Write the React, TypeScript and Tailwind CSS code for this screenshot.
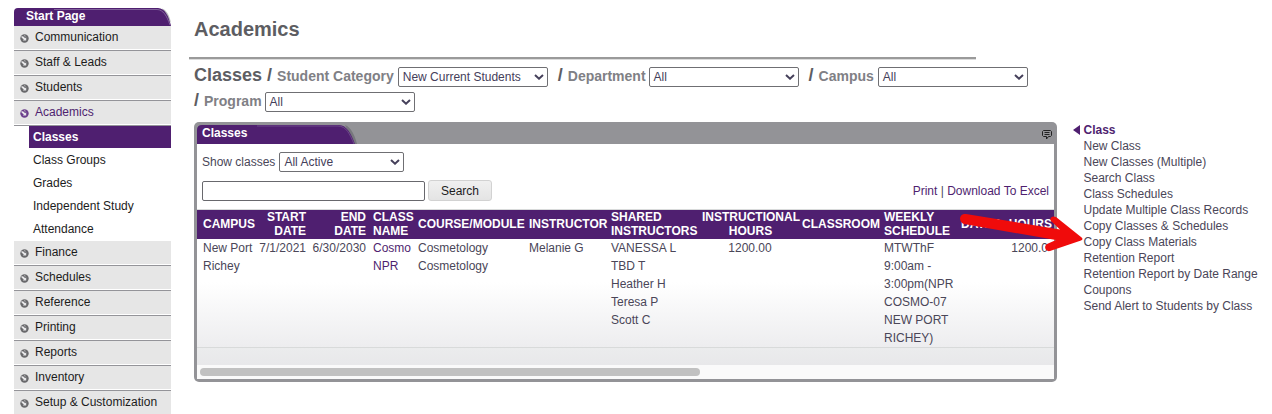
import React from "react";

const top = ["Communication", "Staff & Leads", "Students", "Academics"];
const sub = ["Class Groups", "Grades", "Independent Study", "Attendance"];
const bottom = ["Finance", "Schedules", "Reference", "Printing", "Reports", "Inventory", "Setup & Customization"];
const actions = [
  "New Class", "New Classes (Multiple)", "Search Class", "Class Schedules", "Update Multiple Class Records",
  "Copy Classes & Schedules", "Copy Class Materials", "Retention Report", "Retention Report by Date Range",
  "Coupons", "Send Alert to Students by Class",
];

function Bullet({ active }: { active: boolean }) {
  return (
    <svg width="9" height="9" viewBox="0 0 9 9" className="mt-[3px] shrink-0">
      <circle cx="4.5" cy="4.5" r="4.2" fill={active ? "#6b3f8c" : "#68686b"} />
      <path d="M1 2.6 L3 2.2 L5.2 4.2 L6.2 3.2 V6.6 H2.8 L3.8 5.6 L1.8 3.8 Z" fill="#e8e8ea" />
      <path d="M4 1.6 L5.6 2.2" stroke="#c9c9cc" strokeWidth="0.8" />
    </svg>
  );
}

function NavItem({ label }: { label: string }) {
  const active = label === "Academics";
  return (
    <div className="flex h-[25px] shrink-0 flex-col">
      <div className={"flex h-[23px] items-center bg-[#e6e6e6] pb-[2px] pl-[6px] " + (active ? "text-[#4f1f70]" : "text-[#1c1c1c]")}>
        <Bullet active={active} />
        <span className="ml-[6px] whitespace-nowrap">{label}</span>
      </div>
      <div className="h-px bg-white" />
      <div className="h-px bg-[#949499]" />
    </div>
  );
}

function Select({ value, width }: { value: string; width: string }) {
  return (
    <div className={"flex h-[20px] items-center justify-between rounded-[2px] border border-[#6f6f73] bg-white pl-1 pr-[3px] text-[12px] font-normal text-[#45405a] " + width}>
      <span className="whitespace-nowrap">{value}</span>
      <svg width="10" height="6" viewBox="0 0 10 6" fill="none" stroke="#45405a" strokeWidth="2">
        <path d="M1 1 L5 4.7 L9 1" />
      </svg>
    </div>
  );
}

const cols = "grid grid-cols-[51px_55px_60px_45px_111px_82px_91px_101px_81px_78px_47px_50px]";

export default function App() {
  return (
    <div className="relative flex h-[414px] w-[1272px] overflow-hidden bg-white font-['Liberation_Sans',Arial,sans-serif] text-[12px] leading-[16px] text-[#4a4658]">
      <nav className="ml-[14px] flex w-[157px] shrink-0 flex-col pt-2">
        <div className="relative h-[18px] shrink-0">
          <svg width="157" height="18" className="absolute inset-0">
            <path d="M148 0.5 C153 2 156 9 157 15 Z" fill="#b9b9bd" />
            <path d="M0 18 V4 Q0 0 4 0 H144 C151 0 155 9 157 18 Z" fill="#4f1f70" />
            <path d="M40 1.5 H143 C149 1.5 153 8 156 17" fill="none" stroke="#80609a" />
          </svg>
          <div className="relative pl-3 font-bold text-white">Start Page</div>
        </div>
        {top.map((t) => <NavItem key={t} label={t} />)}
        <div className="flex shrink-0 flex-col pl-[15px] leading-[22px] text-[#1c1c1c]">
          <div className="mb-px h-[22px] bg-[#4f1f70] pl-1 font-bold text-white">Classes</div>
          {sub.map((s) => <div key={s} className="h-[23px] pl-1">{s}</div>)}
        </div>
        {bottom.map((t) => <NavItem key={t} label={t} />)}
      </nav>

      <main className="ml-[18px] w-[868px] shrink-0">
        <h1 className="ml-[5px] mt-[17px] h-[24px] text-[20px] font-bold leading-[24px] text-[#5d5d62]">Academics</h1>
        <div className="mt-4 h-[3px] w-[787px] border-b border-[#dcdcdc] bg-[#9a9a9a]" />
        <div className="ml-[5px] mt-1 flex h-[25px] items-center whitespace-nowrap text-[14px] font-bold text-[#808085]">
          <span className="pb-[3px] text-[18px] text-[#5d5d62]">Classes /</span>
          <span className="ml-[5px] mr-1 pb-[2px]">Student Category</span>
          <Select value="New Current Students" width="w-[150px]" />
          <span className="ml-[10px] pb-[3px] text-[18px] text-[#5d5d62]">/</span>
          <span className="ml-[5px] mr-[3px] pb-[2px]">Department</span>
          <Select value="All" width="w-[150px]" />
          <span className="ml-[10px] pb-[3px] text-[18px] text-[#5d5d62]">/</span>
          <span className="ml-[5px] mr-1 pb-[2px]">Campus</span>
          <Select value="All" width="w-[150px]" />
        </div>
        <div className="ml-[5px] flex h-[25px] items-center text-[14px] font-bold text-[#808085]">
          <span className="pb-[3px] text-[18px] text-[#5d5d62]">/</span>
          <span className="ml-[5px] mr-[3px] pb-[2px]">Program</span>
          <Select value="All" width="w-[150px]" />
        </div>

        <section className="ml-[5px] mt-2 h-[260px] w-[863px] overflow-hidden rounded-[5px] bg-[#939397] px-[3px]">
          <div className="relative flex h-[22px] items-center justify-between">
            <svg width="162" height="22" className="absolute left-0 top-0">
              <path d="M148 3 C154 5 158 14 160 22 H156 Z" fill="#77777d" />
              <path d="M0 22 V8 Q0 3 5 3 H142 C150 3 154 12 158 22 Z" fill="#4f1f70" />
              <path d="M60 4 H141 C149 4 153 12 157 22" fill="none" stroke="#6d4989" />
            </svg>
            <span className="relative pl-[5px] font-bold text-white">Classes</span>
            <svg width="10" height="10" viewBox="0 0 10 10" fill="none" stroke="#222" className="mr-[2px] mt-[3px]">
              <path d="M1.5 .5 H8.5 L9.5 1.5 V5.5 L8.5 6.5 H6.5 L4.5 9 V6.5 H1.5 L.5 5.5 V1.5 Z M2.5 2.5 H7.5 M2.5 4.5 H7.5" />
            </svg>
          </div>
          <div className="h-[235px] bg-white">
            <div className="flex h-9 items-center gap-1 pl-[5px]">
              <span>Show classes</span>
              <Select value="All Active" width="w-[125px]" />
            </div>
            <div className="flex h-[29px] items-start pl-[5px]">
              <div className="mt-px h-[20px] w-[223px] rounded-[2px] border border-[#68686d]" />
              <div className="ml-[3px] h-[21px] w-16 rounded-[3px] border border-[#d2d2d2] bg-linear-to-b from-[#f0f0f0] to-[#e4e4e4] text-center leading-[20px] text-[#1c1c1c]">Search</div>
              <div className="ml-auto mr-[5px] mt-[3px] text-[#4f1f70]">Print <span className="text-[#4a4658]">|</span> Download To Excel</div>
            </div>
            <div className="h-[156px] overflow-hidden border-t border-[#d8dada]">
              <div className={cols + " h-[29px] items-center whitespace-nowrap bg-[#4f1f70] pb-[2px] pl-[6px] font-bold leading-[14px] text-white"}>
                <div>CAMPUS</div>
                <div className="pr-[3px] text-right">START<br />DATE</div>
                <div className="pr-[3px] text-right">END<br />DATE</div>
                <div className="pl-1">CLASS<br />NAME</div>
                <div className="pl-1">COURSE/MODULE</div>
                <div className="pl-1">INSTRUCTOR</div>
                <div className="pl-1">SHARED<br />INSTRUCTORS</div>
                <div className="pl-1 text-center">INSTRUCTIONAL<br />HOURS</div>
                <div className="pl-[3px]">CLASSROOM</div>
                <div className="pl-1">WEEKLY<br />SCHEDULE</div>
                <div className="pl-[3px]">DATES</div>
                <div className="pr-[3px] text-right">HOURS</div>
              </div>
              <div className={cols + " h-[109px] whitespace-nowrap border-b border-[#d8dada] bg-linear-to-b from-white from-40% to-[#ededef] pl-[6px] leading-[18px]"}>
                <div>New Port<br />Richey</div>
                <div className="pr-[3px] text-right">7/1/2021</div>
                <div className="pr-[3px] text-right">6/30/2030</div>
                <div className="pl-1 text-[#4f1f70]">Cosmo<br />NPR</div>
                <div className="pl-1">Cosmetology<br />Cosmetology</div>
                <div className="pl-1">Melanie G</div>
                <div className="pl-1">VANESSA L<br />TBD T<br />Heather H<br />Teresa P<br />Scott C</div>
                <div className="pl-[3px] text-center">1200.00</div>
                <div />
                <div className="pl-1">MTWThF<br />9:00am -<br />3:00pm(NPR<br />COSMO-07<br />NEW PORT<br />RICHEY)</div>
                <div />
                <div className="pr-[7px] text-right">1200.0</div>
              </div>
              <div className="h-[17px] bg-linear-to-b from-[#ebeced] to-[#e8e8ea]" />
            </div>
            <div className="flex h-[14px] items-center bg-[#fafafa] pl-[3px]">
              <div className="h-2 w-[500px] rounded-full bg-[#c1c1c1]" />
            </div>
          </div>
        </section>
      </main>

      <aside className="ml-[15.5px] flex-1 whitespace-nowrap pt-[122px]">
        <div className="flex h-4 items-center font-bold text-[#4f1f70]">
          <svg width="7" height="10" className="mr-[4px]"><path d="M7 0 V10 L0 5 Z" fill="#4f1f70" /></svg>
          Class
        </div>
        {actions.map((a) => <div key={a} className="h-4 pl-[11px]">{a}</div>)}
      </aside>

      <svg width="126" height="44" viewBox="958 210 126 44" className="absolute left-[958px] top-[210px]">
        <path d="M966 214 C959 213 958 222 964 224 L1056 240 L1047 244 C1043 247 1046 252 1050 251 L1081 240.5 Q1084 239 1081 237 L1056 217 C1052 215 1048 219 1052 222 L1060 229.5 Z" fill="#f00b0b" />
      </svg>
    </div>
  );
}
